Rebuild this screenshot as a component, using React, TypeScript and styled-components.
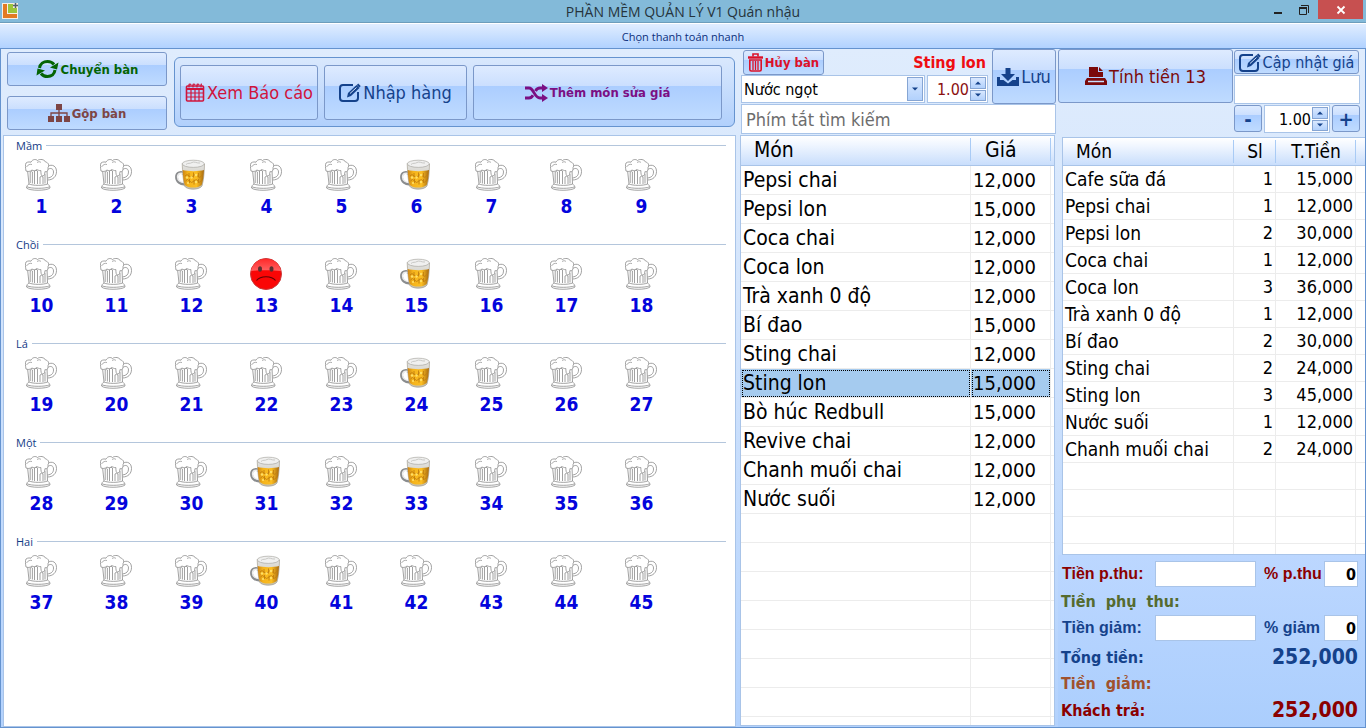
import React, { useState } from "react";
import styled, { createGlobalStyle, css } from "styled-components";

const tahoma = `"DejaVu Sans Condensed", "DejaVu Sans", sans-serif`;
const segoe = `"Open Sans", "Noto Sans", sans-serif`;
const line = "#6593cf";
const softLine = "#a9c4e8";

const GlobalStyle = createGlobalStyle`
  *, *::before, *::after { box-sizing: border-box; }
  html, body { margin: 0; height: 100%; }
  body { font-family: ${tahoma}; background: #dae8fb; color: #000; overflow: hidden; }
  #root { height: 100%; }
  button, input, select { font-family: inherit; margin: 0; border-radius: 0; }
`;

/* ---------- window frame ---------- */

const Window = styled.div`
  display: flex;
  flex-direction: column;
  height: 100vh;
`;

const TitleBar = styled.header`
  display: grid;
  grid-template-columns: 1fr auto 1fr;
  height: 22px;
  background: #83bad9;
  font-family: ${segoe};
`;

const AppIcon = styled.svg`
  width: 16px;
  height: 16px;
  margin: 3px 2px;
`;

const Title = styled.h1`
  margin: 0;
  font-size: 14px;
  line-height: 23px;
  font-weight: 400;
  color: #26343c;
`;

const WindowButtons = styled.div`
  display: flex;
  justify-content: flex-end;
  padding-right: 3px;
`;

const WindowButton = styled.button<{ $close?: boolean }>`
  width: ${(p) => (p.$close ? 45 : 26)}px;
  height: ${(p) => (p.$close ? 19 : 20)}px;
  padding: 0;
  border: 0;
  background: ${(p) => (p.$close ? "#c75050" : "transparent")};
  svg { display: block; margin: 0 auto; }
`;

const QuickPay = styled.button`
  flex: none;
  height: 27px;
  padding: 2px 0 0;
  border: 0;
  border-top: 1px solid #6d9dbb;
  border-bottom: 1px solid ${line};
  background: linear-gradient(#fff 0 1px, #e0edff 1px, #b1d2ff 100%);
  color: #0c2f7c;
  font-family: ${segoe};
  font-size: 11px;
`;

const Body = styled.main`
  flex: 1;
  min-height: 0;
  display: grid;
  grid-template-columns: minmax(0, 1fr) 321px 307px;
  border: solid ${line};
  border-width: 0 1px 1px;
  background: linear-gradient(#dfecfd, #d4e5fc 35%, #b3d2fd);
`;

const Column = styled.div`
  display: flex;
  flex-direction: column;
  min-width: 0;
  min-height: 0;
`;

/* ---------- buttons ---------- */

const Btn = styled.button<{ $color: string; $size?: number; $bold?: boolean; $w?: number; $h?: number }>`
  display: flex;
  align-items: center;
  justify-content: center;
  gap: 2px;
  padding: 0;
  ${(p) => (p.$w ? css`width: ${p.$w}px;` : css`flex: 1;`)}
  ${(p) => p.$h && css`height: ${p.$h}px;`}
  border: 1px solid #7b98c9;
  border-radius: 3px;
  background: linear-gradient(#deebff, #cbdffe 37%, #abcdff 37%, #bfdbff);
  color: ${(p) => p.$color};
  font-size: ${(p) => p.$size ?? 18}px;
  font-weight: ${(p) => (p.$bold ? 700 : 400)};
  white-space: nowrap;
  svg { flex: none; }
`;

const LeftToolbar = styled.div`
  display: flex;
  gap: 7px;
  height: 86px;
  padding: 3px 0 0 6px;
`;

const MoveButtons = styled.div`
  display: flex;
  flex-direction: column;
  gap: 10px;
`;

const ActionGroup = styled.div`
  flex: 1;
  display: flex;
  gap: 6px;
  height: 70px;
  margin-top: 5px;
  margin-right: 2px;
  padding: 7px 12px 6px 5px;
  border: 1px solid ${line};
  border-radius: 6px;
  background: linear-gradient(#d9e8fd, #b1d0fc);
`;

/* ---------- table map ---------- */

const MapPanel = styled.div`
  flex: 1;
  min-height: 0;
  margin: 0 1px 0 2px;
  border: 1px solid ${softLine};
  background: #fff;
`;

const Area = styled.section`
  height: 99px;
`;

const AreaTitle = styled.h2`
  display: flex;
  align-items: center;
  gap: 4px;
  height: 19px;
  margin: 0;
  padding: 0 9px 0 12px;
  font-family: ${segoe};
  font-size: 11px;
  font-weight: 400;
  color: #123a86;
  &::after {
    content: "";
    flex: 1;
    height: 1px;
    background: #b4c6dc;
  }
`;

const Tables = styled.div`
  display: flex;
  flex-wrap: wrap;
`;

const TableButton = styled.button`
  display: flex;
  flex-direction: column;
  align-items: center;
  width: 75px;
  padding: 4px 0 0;
  border: 0;
  background: none;
  color: #0404dc;
  font-size: 19px;
  font-weight: 700;
  line-height: 30px;
  svg { margin-right: 2px; }
`;

/* ---------- inputs ---------- */

const inputBox = css`
  border: 1px solid ${softLine};
  background: #fff;
  outline: 0;
`;

const MidTop = styled.div`
  display: grid;
  grid-template-columns: minmax(0, 1fr) 64px;
  grid-template-rows: 55px 30px;
  margin: 0 2px 1px 4px;
`;

const MidFields = styled.div`
  display: flex;
  flex-direction: column;
  padding: 1px 4px 0 0;
`;

const FieldRow = styled.div<{ $between?: boolean; $pad?: number }>`
  display: flex;
  align-items: center;
  justify-content: ${(p) => (p.$between ? "space-between" : "flex-start")};
  gap: 2px;
  padding: 0 ${(p) => p.$pad ?? 0}px;
`;

const Selected = styled.strong`
  color: #ef0d12;
  font-size: 16px;
`;

const SelectWrap = styled.div`
  flex: 1;
  display: flex;
  height: 28px;
  padding: 1px;
  ${inputBox}
`;

const Select = styled.select`
  appearance: none;
  flex: 1;
  min-width: 0;
  padding: 0 1px;
  border: 0;
  background: transparent;
  color: #000;
  font-size: 16px;
  outline: 0;
`;

const MiniButton = styled.button`
  display: flex;
  align-items: center;
  justify-content: center;
  flex: 1;
  width: 16px;
  padding: 0;
  border: 1px solid #86a5d3;
  background: linear-gradient(#d9e8ff, #b2d1fc);
`;

const DropMark = styled.span`
  display: flex;
  align-items: center;
  justify-content: center;
  width: 16px;
  border: 1px solid #86a5d3;
  background: linear-gradient(#d9e8ff, #b2d1fc);
  pointer-events: none;
`;

const SpinWrap = styled.div<{ $w: number; $color: string }>`
  display: flex;
  width: ${(p) => p.$w}px;
  height: 28px;
  padding: 1px;
  color: ${(p) => p.$color};
  ${inputBox}
`;

const SpinInput = styled.input`
  flex: 1;
  min-width: 0;
  padding: 0 1px;
  border: 0;
  background: transparent;
  color: inherit;
  font-size: 16px;
  text-align: right;
  outline: 0;
`;

const SpinArrows = styled.div`
  display: flex;
  flex-direction: column;
  gap: 1px;
`;

const Search = styled.input`
  grid-column: 1 / -1;
  padding: 0 4px;
  font-size: 18px;
  ${inputBox}
  &::placeholder { color: #6d6d6d; opacity: 1; }
`;

const RightTop = styled.div`
  display: grid;
  grid-template-columns: minmax(0, 1fr) 126px;
  align-items: start;
  gap: 1px;
  height: 88px;
  padding-right: 5px;
`;

const PriceTools = styled.div`
  display: flex;
  flex-direction: column;
  gap: 1px;
  padding-top: 1px;
`;

const PriceInput = styled.input`
  width: 100%;
  height: 29px;
  ${inputBox}
`;

const Stepper = styled.div`
  display: flex;
  justify-content: space-between;
`;

/* ---------- data lists ---------- */

const ListBox = styled.div<{ $cols: number[]; $row: number; $head: number }>`
  flex: 1;
  min-height: 0;
  display: flex;
  flex-direction: column;
  overflow: hidden;
  border: 1px solid ${softLine};
  background: #fff;
  --head: ${(p) => p.$head}px;
  --row: ${(p) => p.$row}px;
  --c1: ${(p) => p.$cols[0]}px;
  --c2: ${(p) => p.$cols[1]}px;
  --c3: ${(p) => p.$cols[2]}px;
`;

const DataTable = styled.table`
  width: 100%;
  border-collapse: separate;
  border-spacing: 0;
  table-layout: fixed;
  th {
    height: var(--head);
    padding: 0;
    line-height: 1;
    font-weight: 400;
    border-bottom: 1px solid ${softLine};
    background: linear-gradient(#a9cbf5, #a9cbf5) 100% 2px / 1px 23px no-repeat,
      linear-gradient(#fff, #f0f6ff 30%, #c9defc);
  }
  td {
    height: var(--row);
    padding: 0 2px;
    line-height: 1;
    border-right: 1px solid #ececec;
    border-bottom: 1px solid #ececec;
    white-space: nowrap;
  }
  th:last-child { background: linear-gradient(#fff, #f0f6ff 30%, #c9defc); }
  td:last-child { border-right: 0; }
`;

const HeadCell = styled.th<{ $w?: number; $align?: string }>`
  width: ${(p) => (p.$w ? `${p.$w}px` : "auto")};
  text-align: ${(p) => p.$align ?? "center"};
  &:first-child { padding-left: 13px; }
`;

const HeadText = styled.span`
  padding-left: 14px;
`;

const Row = styled.tr<{ $selected?: boolean }>`
  ${(p) =>
    p.$selected &&
    css`
      td:not(:last-child) {
        background: #a5cbef;
        outline: 1px dotted #000;
        outline-offset: -2px;
      }
    `}
`;

const Price = styled.td`
  font-size: 20px;
`;

const Num = styled.td`
  font-size: 18px;
  text-align: right;
`;

const EmptyRows = styled.div`
  flex: 1;
  background:
    linear-gradient(#ececec, #ececec) calc(var(--c1) - 1px) 0 / 1px 100% no-repeat,
    linear-gradient(#ececec, #ececec) calc(var(--c2) - 1px) 0 / 1px 100% no-repeat,
    linear-gradient(#ececec, #ececec) calc(var(--c3) - 1px) 0 / 1px 100% no-repeat,
    repeating-linear-gradient(transparent 0 calc(var(--row) - 1px), #ececec calc(var(--row) - 1px) var(--row));
`;

const MenuList = styled(ListBox)`
  margin: 0 3px 1px;
  font-size: 21px;
`;

const BillList = styled(ListBox)`
  margin-left: 4px;
  border-right: 0;
  font-size: 19px;
`;

/* ---------- totals ---------- */

const Totals = styled.div`
  display: grid;
  grid-template-columns: 94px 101px 1fr 34px;
  grid-template-rows: 28px 26px 28px 30px 22px 32px;
  align-items: center;
  height: 172px;
  padding: 5px 7px 0 3px;
  background: linear-gradient(#bcd7ff, #abcefd);
`;

const Label = styled.label<{ $color: string }>`
  padding-left: 1px;
  color: ${(p) => p.$color};
  font-family: "Liberation Sans", sans-serif;
  font-size: 16px;
  font-weight: 700;
  white-space: nowrap;
`;

const PercentLabel = styled(Label)`
  padding-left: 8px;
`;

const Caption = styled.span<{ $color: string; $wide?: boolean }>`
  grid-column: ${(p) => (p.$wide ? "1 / -1" : "1 / 3")};
  color: ${(p) => p.$color};
  font-size: 16px;
  font-weight: 700;
  white-space: pre;
`;

const Amount = styled.output<{ $color: string }>`
  grid-column: 3 / -1;
  justify-self: end;
  color: ${(p) => p.$color};
  font-size: 21px;
  font-weight: 700;
`;

const TotalInput = styled.input`
  width: 100%;
  height: 26px;
  padding: 0 1px;
  font-size: 16px;
  font-weight: 700;
  text-align: right;
  ${inputBox}
`;

/* ---------- icons ---------- */

const RefreshIcon = () => (
  <svg width="23" height="20" viewBox="0 0 23 20" fill="none" stroke="currentColor" strokeWidth="3">
    <path d="M3.500 9C4 5 7.500 2.500 11.500 2.500c3 0 5 1 6.500 3" />
    <path d="M19 11c-.5 4-3.500 6.500-7.500 6.500-3 0-5-1-6.500-3" />
    <path d="M22.500 3.500l-1.500 7-7-2zM.5 16.500l1-7 7.500 2z" fill="currentColor" stroke="none" />
  </svg>
);

const SitemapIcon = () => (
  <svg width="22" height="18" viewBox="0 0 22 18" fill="currentColor">
    <path d="M8 0h6v6H8zM0 12h6v6H0zM8 12h6v6H8zM16 12h6v6h-6z" />
    <path d="M3 12V9h16v3M11 6v6" fill="none" stroke="currentColor" strokeWidth="1.300" />
  </svg>
);

const CalendarIcon = () => (
  <svg width="20" height="20" viewBox="0 0 20 20" fill="none" stroke="currentColor" strokeWidth="1.200">
    <rect x="1.500" y="3" width="17" height="15" rx="1" strokeWidth="1.600" />
    <path d="M1 6h18" strokeWidth="2" />
    <path d="M1 10h18M1 14h18M6 7v11M10 7v11M14 7v11" />
    <path d="M4 4.500V2q0-1 1-1t1 1M8 4.500V2q0-1 1-1t1 1M12 4.500V2q0-1 1-1t1 1M16 4.500V2q0-1 1-1" />
  </svg>
);

const EditIcon = () => (
  <svg width="22" height="19" viewBox="0 0 22 19" fill="none" stroke="currentColor">
    <path d="M14 2H4Q1 2 1 5v10q0 3 3 3h12q3 0 3-3V9" strokeWidth="2" />
    <path d="M8 14.500l1-4.500 8.500-8 3 3-8.500 8z" fill="currentColor" stroke="none" />
    <path d="M11 10.500l6.500-6" stroke="#d5e5fd" strokeWidth="1" />
    <path d="M18.500 1.200l2.500 2.600" strokeWidth="2" />
  </svg>
);

const ShuffleIcon = () => (
  <svg width="23" height="18" viewBox="0 0 23 18" fill="none" stroke="currentColor" strokeWidth="2.800">
    <path d="M0 4h4c5 0 5 10 11 10h3M0 14h4c1.800 0 3-1 4-2.800M10.500 7c1-2 2.500-3 4.500-3h3" />
    <path d="M17 0l6 4-6 4zM17 10l6 4-6 4z" fill="currentColor" stroke="none" />
  </svg>
);

const TrashIcon = () => (
  <svg width="15" height="19" viewBox="0 0 15 19" fill="none" stroke="currentColor" strokeWidth="1.600">
    <path d="M0 4.500h15" strokeWidth="2.400" />
    <path d="M5 3.500V1h5v2.500" />
    <path d="M1.800 7h11.400v9.500q0 1.500-1.500 1.500H3.300q-1.500 0-1.500-1.500z" />
    <path d="M5 8v9M7.500 8v9M10 8v9" strokeWidth="1.300" />
  </svg>
);

const SaveIcon = () => (
  <svg width="22" height="18" viewBox="0 0 22 18" fill="currentColor">
    <path d="M8.500 0h5v6H18l-7 7-7-7h4.500z" />
    <path d="M0 9h3v3h3.500l4.500 3.500 4.500-3.500H19V9h3v9H0z" />
  </svg>
);

const PrintIcon = () => (
  <svg width="22" height="18" viewBox="0 0 22 18" fill="currentColor">
    <path d="M4 0h9v5h5v5H4z" />
    <path d="M14 0l4 4h-4z" />
    <path d="M2 11h18l2 3v4H0v-4z" />
    <path d="M3 14.500h16" stroke="#c9dffd" strokeWidth="1.500" />
  </svg>
);

const Arrow = ({ up }: { up?: boolean }) => (
  <svg width="6" height="4" viewBox="0 0 6 4">
    <path d={up ? "M0 3.500h6L3 .5z" : "M0 .5h6l-3 3z"} fill="#15428b" />
  </svg>
);

const EmptyMug = () => (
  <svg width="32" height="32" viewBox="0 0 32 32" fill="#fff" stroke="#8a8a8a" strokeWidth="0.800" strokeLinejoin="round">
    <path d="M22 8.500c2-3.500 9.500-3.500 9.500 4 0 5-3.500 8.500-9 8.500" />
    <path d="M22.500 11c2-2.500 6-2 6 2 0 3.500-2 5.500-6 6" />
    <path d="M2.500 11L4 25c-1.200.6-2.500 2-2.500 4 3 3 20 3 23.500 0 0-2-1.300-3.400-2.500-4L22 10z" />
    <path d="M4 25c4 1.800 14.500 1.800 18.500 0M2 27.800c4 2 18.500 2 22.500 0" fill="none" />
    <path d="M5.200 24V13q1.200-1.500 2.200 0V24.500M9.500 25V12q1.500-1.500 3 0v13M15 25V18q1.500-1.500 3 0v7M20 24.500V15" fill="none" />
    <path d="M1 12C.5 9 0 6 1 4 3 2.500 5 3 6 3.200 7.500 0 11 0 12.500 1.500 15-.5 19.500.5 20.500 3c3 .5 4 3.500 2.500 5.500.3 3-1 5-3 4-.3 2-.3 4.500-2.200 4.500s-1.800-2.500-2-5.500c-2 .5-3-1-4.300-.8-1.500 1.300-3 1.300-4.500.3C5 13 2.500 12.500 1 12z" />
    <path d="M1.500 8C3 5.500 5 5 7 5.500M12 3.500c1.500-1 3-1 4 0" fill="none" strokeWidth="0.700" />
  </svg>
);

const FullMug = () => (
  <svg width="32" height="32" viewBox="0 0 32 32">
    <defs>
      <linearGradient id="beer" x1="0" x2="1">
        <stop offset="0" stopColor="#cc8414" />
        <stop offset="0.250" stopColor="#f5b41c" />
        <stop offset="0.650" stopColor="#fbbd22" />
        <stop offset="1" stopColor="#a86a10" />
      </linearGradient>
      <linearGradient id="foam" x1="0" x2="0" y1="0" y2="1">
        <stop offset="0" stopColor="#e4e4e2" />
        <stop offset="1" stopColor="#c4bfae" />
      </linearGradient>
    </defs>
    <path d="M9 14.500C6 12.500 1.500 13.500 1.500 18c0 4.500 4 7.500 8.500 7" fill="none" stroke="#8a8c8e" strokeWidth="2.800" />
    <path d="M9 15c-2.500-1.500-6.500-1-6.500 3 0 3.500 3.500 6 7.500 5.500" fill="none" stroke="#ececec" strokeWidth="1.400" />
    <path d="M7.200 4.500c.3 8 .8 16 2.300 22.500 2 4 14.500 4.500 17.500 0 1.800-6 2.300-14 2.500-22z" fill="url(#foam)" stroke="#9a9484" strokeWidth="0.600" />
    <path d="M7.700 11c.3 6 .9 11.500 2 15 3 3.300 13.500 3.500 17 0 1.500-4.500 2-9.500 2.300-15-4.500 1.500-16.500 1.500-21.300 0z" fill="url(#beer)" />
    <g fill="none" stroke="#c27f0e" strokeWidth="0.900">
      <path d="M10 17q2-3 4 0t4 0 4.500 0 4.500-1M10.500 22q2-3 4 0t4.500 0 4 0 4-1.500" />
      <path d="M14 14v4M18.500 13.500v5M23.500 14v4M14.500 20v4M19 20.500v5M23.500 20v4" />
    </g>
    <g fill="#ffdf66">
      <circle cx="12" cy="18.500" r="1.200" />
      <circle cx="16.500" cy="18.500" r="1.200" />
      <circle cx="21" cy="16" r="1.300" />
      <circle cx="21" cy="23" r="1.200" />
      <circle cx="13" cy="24" r="1.100" />
    </g>
    <ellipse cx="18.300" cy="4.800" rx="11" ry="3.600" fill="#f0f0ef" stroke="#aaa9a4" strokeWidth="0.700" />
    <path d="M11 5.500c2-2 4-.5 6-2s5 1 8 .5" fill="none" stroke="#c9c9c6" />
  </svg>
);

const SadFace = () => (
  <svg width="32" height="32" viewBox="0 0 32 32">
    <defs>
      <linearGradient id="gloss" x1="0" y1="0" x2="0" y2="1">
        <stop offset="0" stopColor="#ff2a2a" />
        <stop offset="1" stopColor="#ff6262" />
      </linearGradient>
    </defs>
    <circle cx="16" cy="16" r="15.500" fill="#fa0606" stroke="#c83a3a" />
    <path d="M1 13C3 5 8 1 16 1s13 4 15 12c-9-1-21-1-30 0z" fill="url(#gloss)" />
    <ellipse cx="10" cy="11" rx="2" ry="2.800" fill="#5d3030" />
    <ellipse cx="21.500" cy="11" rx="2" ry="2.800" fill="#5d3030" />
    <path d="M6.500 22.500c4-5 15-5 19 0" fill="none" stroke="#5a0505" strokeWidth="1.200" />
  </svg>
);

/* ---------- data ---------- */

const areas = ["Mầm", "Chồi", "Lá", "Một", "Hai"];
const busy = [3, 6, 15, 24, 31, 33, 40];

const menu: [string, string][] = [
  ["Pepsi chai", "12,000"],
  ["Pepsi lon", "15,000"],
  ["Coca chai", "12,000"],
  ["Coca lon", "12,000"],
  ["Trà xanh 0 độ", "12,000"],
  ["Bí đao", "15,000"],
  ["Sting chai", "12,000"],
  ["Sting lon", "15,000"],
  ["Bò húc Redbull", "15,000"],
  ["Revive chai", "12,000"],
  ["Chanh muối chai", "12,000"],
  ["Nước suối", "12,000"],
];

const bill: [string, number, string][] = [
  ["Cafe sữa đá", 1, "15,000"],
  ["Pepsi chai", 1, "12,000"],
  ["Pepsi lon", 2, "30,000"],
  ["Coca chai", 1, "12,000"],
  ["Coca lon", 3, "36,000"],
  ["Trà xanh 0 độ", 1, "12,000"],
  ["Bí đao", 2, "30,000"],
  ["Sting chai", 2, "24,000"],
  ["Sting lon", 3, "45,000"],
  ["Nước suối", 1, "12,000"],
  ["Chanh muối chai", 2, "24,000"],
];

const Spinner = ({ width, color, label }: { width: number; color: string; label: string }) => {
  const [value, setValue] = useState("1.00");
  const step = (d: number) => setValue((v) => Math.max(0, (parseFloat(v) || 0) + d).toFixed(2));
  return (
    <SpinWrap $w={width} $color={color}>
      <SpinInput aria-label={label} value={value} onChange={(e) => setValue(e.target.value)} />
      <SpinArrows>
        <MiniButton aria-label="Tăng" onClick={() => step(1)}><Arrow up /></MiniButton>
        <MiniButton aria-label="Giảm" onClick={() => step(-1)}><Arrow /></MiniButton>
      </SpinArrows>
    </SpinWrap>
  );
};

export default function App() {
  const [item, setItem] = useState("Sting lon");
  const [table, setTable] = useState(13);

  return (
    <Window>
      <GlobalStyle />
      <TitleBar>
        <AppIcon viewBox="0 0 16 16">
          <path d="M0 0h16v16H0z" fill="#f6efe4" />
          <path d="M1 1h4v10h10v4H1z" fill="#e37a22" />
          <path d="M6 1h5v4h4v5H6z" fill="#9bc53b" />
          <path d="M13.500 0v5M11 2.500h5" stroke="#55606a" strokeWidth="1.500" />
        </AppIcon>
        <Title>PHẦN MỀM QUẢN LÝ V1 Quán nhậu</Title>
        <WindowButtons>
          <WindowButton aria-label="Thu nhỏ">
            <svg width="12" height="12" viewBox="0 0 12 12"><path d="M1 9h8" stroke="#222" strokeWidth="2" /></svg>
          </WindowButton>
          <WindowButton aria-label="Khôi phục">
            <svg width="12" height="12" viewBox="0 0 12 12" fill="none" stroke="#222">
              <path d="M.5 4.500h7v6h-7z" /><path d="M0 4h8" strokeWidth="2" /><path d="M2 1.500h7.500V9" />
            </svg>
          </WindowButton>
          <WindowButton $close aria-label="Đóng">
            <svg width="10" height="10" viewBox="0 0 10 10"><path d="M1.500 1.500l7 7M8.500 1.500l-7 7" stroke="#fff" strokeWidth="1.800" /></svg>
          </WindowButton>
        </WindowButtons>
      </TitleBar>
      <QuickPay>Chọn thanh toán nhanh</QuickPay>

      <Body>
        <Column>
          <LeftToolbar>
            <MoveButtons>
              <Btn $color="#046404" $size={13} $bold $w={160} $h={34}><RefreshIcon />Chuyển bàn</Btn>
              <Btn $color="#7d4545" $size={13} $bold $w={160} $h={34}><SitemapIcon />Gộp bàn</Btn>
            </MoveButtons>
            <ActionGroup>
              <Btn $color="#d0143c" $w={138}><CalendarIcon />Xem Báo cáo</Btn>
              <Btn $color="#15428b" $w={143}><EditIcon />Nhập hàng</Btn>
              <Btn $color="#7b0f83" $size={13} $bold><ShuffleIcon />Thêm món sửa giá</Btn>
            </ActionGroup>
          </LeftToolbar>
          <MapPanel>
            {areas.map((name, a) => (
              <Area key={name}>
                <AreaTitle>{name}</AreaTitle>
                <Tables>
                  {Array.from({ length: 9 }, (_, i) => a * 9 + i + 1).map((n) => (
                    <TableButton key={n} onClick={() => setTable(n)}>
                      {n === table ? <SadFace /> : busy.includes(n) ? <FullMug /> : <EmptyMug />}
                      {n}
                    </TableButton>
                  ))}
                </Tables>
              </Area>
            ))}
          </MapPanel>
        </Column>

        <Column>
          <MidTop>
            <MidFields>
              <FieldRow $between $pad={2}>
                <Btn $color="#dc1028" $size={13} $bold $w={81} $h={25}><TrashIcon />Hủy bàn</Btn>
                <Selected>{item}</Selected>
              </FieldRow>
              <FieldRow>
                <SelectWrap>
                  <Select aria-label="Nhóm món" defaultValue="Nước ngọt"><option>Nước ngọt</option></Select>
                  <DropMark><Arrow /></DropMark>
                </SelectWrap>
                <Spinner width={61} color="#8b1010" label="Số lượng" />
              </FieldRow>
            </MidFields>
            <Btn $color="#15428b" $w={64}><SaveIcon />Lưu</Btn>
            <Search aria-label="Tìm kiếm" placeholder="Phím tắt tìm kiếm" />
          </MidTop>
          <MenuList $cols={[230, 310, 310]} $row={29} $head={30}>
            <DataTable>
              <thead>
                <tr>
                  <HeadCell $w={230} $align="left">Món</HeadCell>
                  <HeadCell $w={80} $align="left"><HeadText>Giá</HeadText></HeadCell>
                  <HeadCell />
                </tr>
              </thead>
              <tbody>
                {menu.map(([name, price]) => (
                  <Row key={name} $selected={name === item} onClick={() => setItem(name)}>
                    <td>{name}</td>
                    <Price>{price}</Price>
                    <td />
                  </Row>
                ))}
              </tbody>
            </DataTable>
            <EmptyRows />
          </MenuList>
        </Column>

        <Column>
          <RightTop>
            <Btn $color="#7b0a0a" $h={54}><PrintIcon />Tính tiền {table}</Btn>
            <PriceTools>
              <Btn $color="#15428b" $size={16} $w={125} $h={24}><EditIcon />Cập nhật giá</Btn>
              <PriceInput aria-label="Giá mới" />
              <Stepper>
                <Btn $color="#15428b" $size={20} $bold $w={28} $h={27}>-</Btn>
                <Spinner width={66} color="#000" label="Số lượng thêm" />
                <Btn $color="#15428b" $size={20} $bold $w={28} $h={27}>+</Btn>
              </Stepper>
            </PriceTools>
          </RightTop>
          <BillList $cols={[171, 213, 293]} $row={27} $head={28}>
            <DataTable>
              <thead>
                <tr>
                  <HeadCell $w={171} $align="left">Món</HeadCell>
                  <HeadCell $w={42}>Sl</HeadCell>
                  <HeadCell $w={80}>T.Tiền</HeadCell>
                  <HeadCell />
                </tr>
              </thead>
              <tbody>
                {bill.map(([name, qty, total]) => (
                  <Row key={name}>
                    <td>{name}</td>
                    <Num>{qty}</Num>
                    <Num>{total}</Num>
                    <td />
                  </Row>
                ))}
              </tbody>
            </DataTable>
            <EmptyRows />
          </BillList>
          <Totals>
            <Label $color="#8b0000" htmlFor="fee">Tiền p.thu:</Label>
            <TotalInput id="fee" />
            <PercentLabel $color="#8b0000" htmlFor="feePct">% p.thu</PercentLabel>
            <TotalInput id="feePct" defaultValue="0" />
            <Caption $color="#556b2f" $wide>{"Tiền  phụ  thu:"}</Caption>
            <Label $color="#15428b" htmlFor="cut">Tiền giảm:</Label>
            <TotalInput id="cut" />
            <PercentLabel $color="#15428b" htmlFor="cutPct">% giảm</PercentLabel>
            <TotalInput id="cutPct" defaultValue="0" />
            <Caption $color="#15428b">Tổng tiền:</Caption>
            <Amount $color="#15428b">252,000</Amount>
            <Caption $color="#a0522d" $wide>{"Tiền  giảm:"}</Caption>
            <Caption $color="#8b0000">Khách trả:</Caption>
            <Amount $color="#8b0000">252,000</Amount>
          </Totals>
        </Column>
      </Body>
    </Window>
  );
}
